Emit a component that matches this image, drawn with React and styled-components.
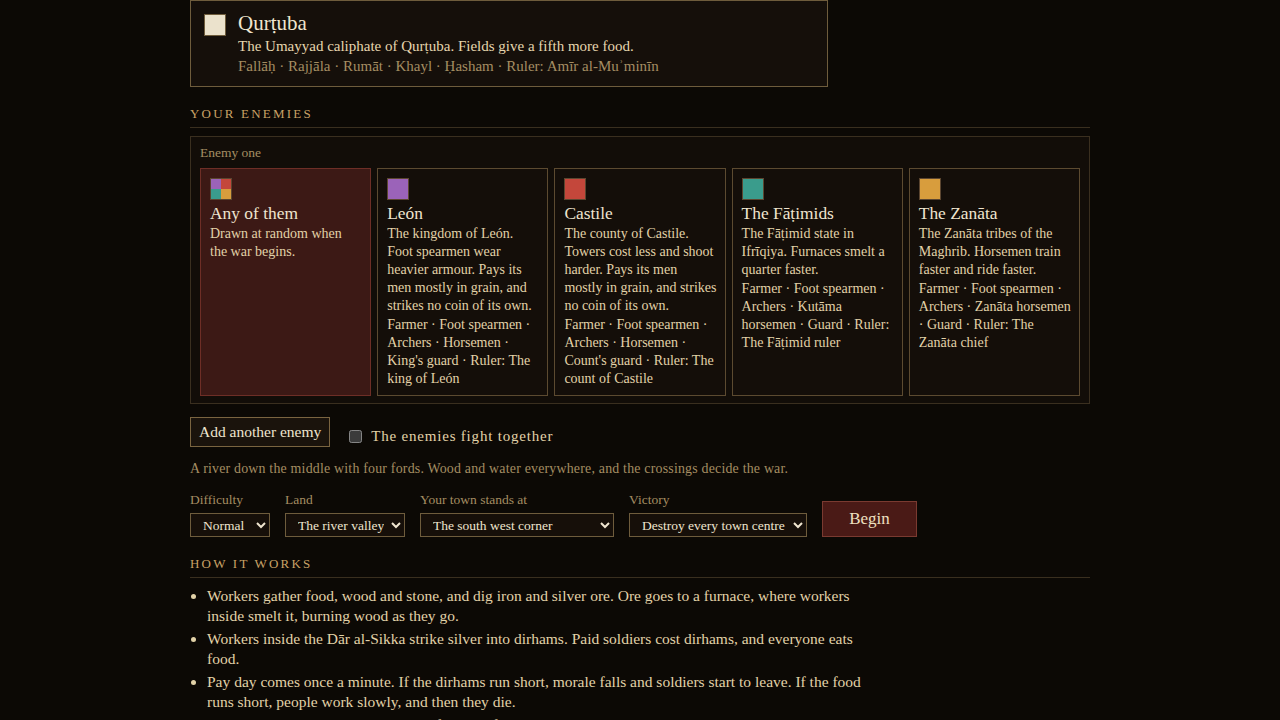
import React, { useState } from 'react'
import styled, { createGlobalStyle } from 'styled-components'

const GlobalStyle = createGlobalStyle`
  html, body {
    margin: 0;
    padding: 0;
    background: #0c0905;
    color: #e2d2a8;
    font-family: "Liberation Serif", "Times New Roman", serif;
  }
`;

const enemies = [
  {
    id: 'any',
    name: 'Any of them',
    colors: ['#9b63b9', '#c4473b', '#3a9c8c', '#d89d3d'],
    text: 'Drawn at random when the war begins.',
  },
  {
    id: 'leon',
    name: 'León',
    colors: ['#9b63b9'],
    text: 'The kingdom of León. Foot spearmen wear heavier armour. Pays its men mostly in grain, and strikes no coin of its own.',
    units: "Farmer · Foot spearmen · Archers · Horsemen · King's guard · Ruler: The king of León",
  },
  {
    id: 'castile',
    name: 'Castile',
    colors: ['#c4473b'],
    text: 'The county of Castile. Towers cost less and shoot harder. Pays its men mostly in grain, and strikes no coin of its own.',
    units: "Farmer · Foot spearmen · Archers · Horsemen · Count's guard · Ruler: The count of Castile",
  },
  {
    id: 'fatimids',
    name: 'The Fāṭimids',
    colors: ['#3a9c8c'],
    text: 'The Fāṭimid state in Ifrīqiya. Furnaces smelt a quarter faster.',
    units: 'Farmer · Foot spearmen · Archers · Kutāma horsemen · Guard · Ruler: The Fāṭimid ruler',
  },
  {
    id: 'zanata',
    name: 'The Zanāta',
    colors: ['#d89d3d'],
    text: 'The Zanāta tribes of the Maghrib. Horsemen train faster and ride faster.',
    units: 'Farmer · Foot spearmen · Archers · Zanāta horsemen · Guard · Ruler: The Zanāta chief',
  },
];

const rules = [
  'Workers gather food, wood and stone, and dig iron and silver ore. Ore goes to a furnace, where workers inside smelt it, burning wood as they go.',
  'Workers inside the Dār al-Sikka strike silver into dirhams. Paid soldiers cost dirhams, and everyone eats food.',
  'Pay day comes once a minute. If the dirhams run short, morale falls and soldiers start to leave. If the food runs short, people work slowly, and then they die.',
  'Build a Dār al-Sikka early, and keep furnaces fed, or your soldiers will not stay long when pay day comes round.',
];

const Swatch = ({ colors }) => (
  <SwatchBox>
    {colors.length === 1 ? (
      <SwatchFill $color={colors[0]} />
    ) : (
      <SwatchQuarters>
        {colors.map((c) => <SwatchFill key={c} $color={c} />)}
      </SwatchQuarters>
    )}
  </SwatchBox>
);

const App = () => {
  const [picked, setPicked] = useState('any');
  const [together, setTogether] = useState(false);

  return (
    <>
      <GlobalStyle />
      <Wrap>
        <FactionCard>
          <Swatch colors={['#ebe2cc']} />
          <div>
            <FactionName>Qurṭuba</FactionName>
            <FactionText>The Umayyad caliphate of Qurṭuba. Fields give a fifth more food.</FactionText>
            <FactionUnits>Fallāḥ · Rajjāla · Rumāt · Khayl · Ḥasham · Ruler: Amīr al-Muʾminīn</FactionUnits>
          </div>
        </FactionCard>

        <SectionTitle>Your enemies</SectionTitle>
        <EnemyPanel>
          <PanelLabel>Enemy one</PanelLabel>
          <EnemyGrid>
            {enemies.map((e) => (
              <EnemyCard key={e.id} $active={picked === e.id} onClick={() => setPicked(e.id)}>
                <Swatch colors={e.colors} />
                <EnemyName>{e.name}</EnemyName>
                <EnemyText>{e.text}</EnemyText>
                {e.units && <EnemyText>{e.units}</EnemyText>}
              </EnemyCard>
            ))}
          </EnemyGrid>
        </EnemyPanel>

        <ActionRow>
          <PlainButton>Add another enemy</PlainButton>
          <CheckLabel>
            <input type="checkbox" checked={together} onChange={() => setTogether(!together)} />
            The enemies fight together
          </CheckLabel>
        </ActionRow>

        <MapNote>A river down the middle with four fords. Wood and water everywhere, and the crossings decide the war.</MapNote>

        <SettingsRow>
          <Field>
            <FieldLabel>Difficulty</FieldLabel>
            <Select $w={80} defaultValue="normal">
              <option value="easy">Easy</option>
              <option value="normal">Normal</option>
              <option value="hard">Hard</option>
            </Select>
          </Field>
          <Field>
            <FieldLabel>Land</FieldLabel>
            <Select $w={120} defaultValue="river">
              <option value="river">The river valley</option>
              <option value="hills">The hills</option>
            </Select>
          </Field>
          <Field>
            <FieldLabel>Your town stands at</FieldLabel>
            <Select $w={194} defaultValue="sw">
              <option value="sw">The south west corner</option>
              <option value="ne">The north east corner</option>
            </Select>
          </Field>
          <Field>
            <FieldLabel>Victory</FieldLabel>
            <Select $w={178} defaultValue="centres">
              <option value="centres">Destroy every town centre</option>
              <option value="ruler">Kill the ruler</option>
            </Select>
          </Field>
          <BeginButton>Begin</BeginButton>
        </SettingsRow>

        <SectionTitle $top={18}>How it works</SectionTitle>
        <Rules>
          {rules.map((r) => <li key={r}>{r}</li>)}
        </Rules>
      </Wrap>
    </>
  )
}

export default App

const Wrap = styled.div`
  width: 900px;
  margin: 0 auto;
`;

const SwatchBox = styled.div`
  width: 20px;
  height: 20px;
  flex: none;
  border: 1px solid #5c4630;
  display: flex;
`;

const SwatchQuarters = styled.div`
  flex: 1;
  display: grid;
  grid-template-columns: 1fr 1fr;
  grid-template-rows: 1fr 1fr;
`;

const SwatchFill = styled.div`
  flex: 1;
  background: ${(p) => p.$color};
`;

const FactionCard = styled.div`
  width: 638px;
  box-sizing: border-box;
  display: flex;
  align-items: flex-start;
  gap: 12px;
  padding: 12px 13px 10px;
  background: #150f0a;
  border: 1px solid #6e5c3c;

  ${SwatchBox} {
    margin-top: 1px;
    border-color: #6e5c3c;
  }
`;

const FactionName = styled.div`
  color: #efe5cf;
  font-size: 21px;
  line-height: 20px;
`;

const FactionText = styled.div`
  font-size: 15px;
  line-height: 20px;
  margin-top: 3px;
  color: #e6d6ae;
`;

const FactionUnits = styled.div`
  font-size: 15px;
  line-height: 20px;
  color: #a48d62;
`;

const SectionTitle = styled.div`
  margin-top: ${(p) => p.$top ?? 18}px;
  padding-bottom: 4px;
  border-bottom: 1px solid #3a2f1f;
  color: #c9a266;
  font-size: 13px;
  line-height: 18px;
  letter-spacing: 2.2px;
  text-transform: uppercase;
`;

const EnemyPanel = styled.div`
  margin-top: 8px;
  padding: 8px 9px 7px;
  background: #120d08;
  border: 1px solid #3a2f1f;
`;

const PanelLabel = styled.div`
  color: #a48d62;
  font-size: 13.5px;
  line-height: 16px;
  margin-bottom: 7px;
`;

const EnemyGrid = styled.div`
  display: grid;
  grid-template-columns: repeat(5, 1fr);
  gap: 6px;
`;

const EnemyCard = styled.div`
  height: 228px;
  box-sizing: border-box;
  padding: 9px 8px 9px 9px;
  cursor: pointer;
  background: ${(p) => (p.$active ? '#3c1915' : '#140e09')};
  border: 1px solid ${(p) => (p.$active ? '#6e2e26' : '#5c4a30')};
`;

const EnemyName = styled.div`
  margin-top: 1px;
  color: #efe5cf;
  font-size: 17.4px;
  line-height: 24px;
`;

const EnemyText = styled.div`
  font-size: 14px;
  line-height: 18px;
  color: #e2d2a8;
  & + & {
    margin-top: 1px;
  }
`;

const ActionRow = styled.div`
  margin-top: 13px;
  display: flex;
  align-items: center;
  gap: 19px;
`;

const PlainButton = styled.button`
  height: 30px;
  padding: 0 8px;
  background: #1a130c;
  border: 1px solid #7a6440;
  color: #efe5cf;
  font-family: inherit;
  font-size: 15.5px;
  cursor: pointer;
`;

const CheckLabel = styled.label`
  display: flex;
  align-items: center;
  gap: 9px;
  margin-top: 9px;
  color: #e2d2a8;
  font-size: 15px;
  letter-spacing: 0.8px;

  input {
    margin: 0;
    width: 13px;
    height: 13px;
    color-scheme: dark;
  }
`;

const MapNote = styled.div`
  margin-top: 13px;
  color: #a48d62;
  font-size: 13.9px;
  line-height: 18px;
  letter-spacing: 0.2px;
`;

const SettingsRow = styled.div`
  margin-top: 14px;
  display: flex;
  align-items: flex-end;
  gap: 15px;
`;

const Field = styled.div`
  display: flex;
  flex-direction: column;
  gap: 5px;
`;

const FieldLabel = styled.div`
  color: #a48d62;
  font-size: 13.5px;
  line-height: 16px;
`;

const Select = styled.select`
  width: ${(p) => p.$w}px;
  height: 24px;
  padding: 0 4px 0 8px;
  color-scheme: dark;
  background: #160f09;
  border: 1px solid #6e5c3c;
  border-radius: 0;
  color: #efe5cf;
  font-family: inherit;
  font-size: 13.5px;
`;

const BeginButton = styled.button`
  width: 95px;
  height: 36px;
  background: #4a1a16;
  border: 1px solid #7a3a30;
  color: #efe0c0;
  font-family: inherit;
  font-size: 17px;
  cursor: pointer;
`;

const Rules = styled.ul`
  margin: 8px 0 0;
  padding-left: 17px;
  max-width: 670px;
  font-size: 15.5px;
  line-height: 20px;
  color: #e2d2a8;

  li {
    margin-bottom: 3px;
  }
`;
